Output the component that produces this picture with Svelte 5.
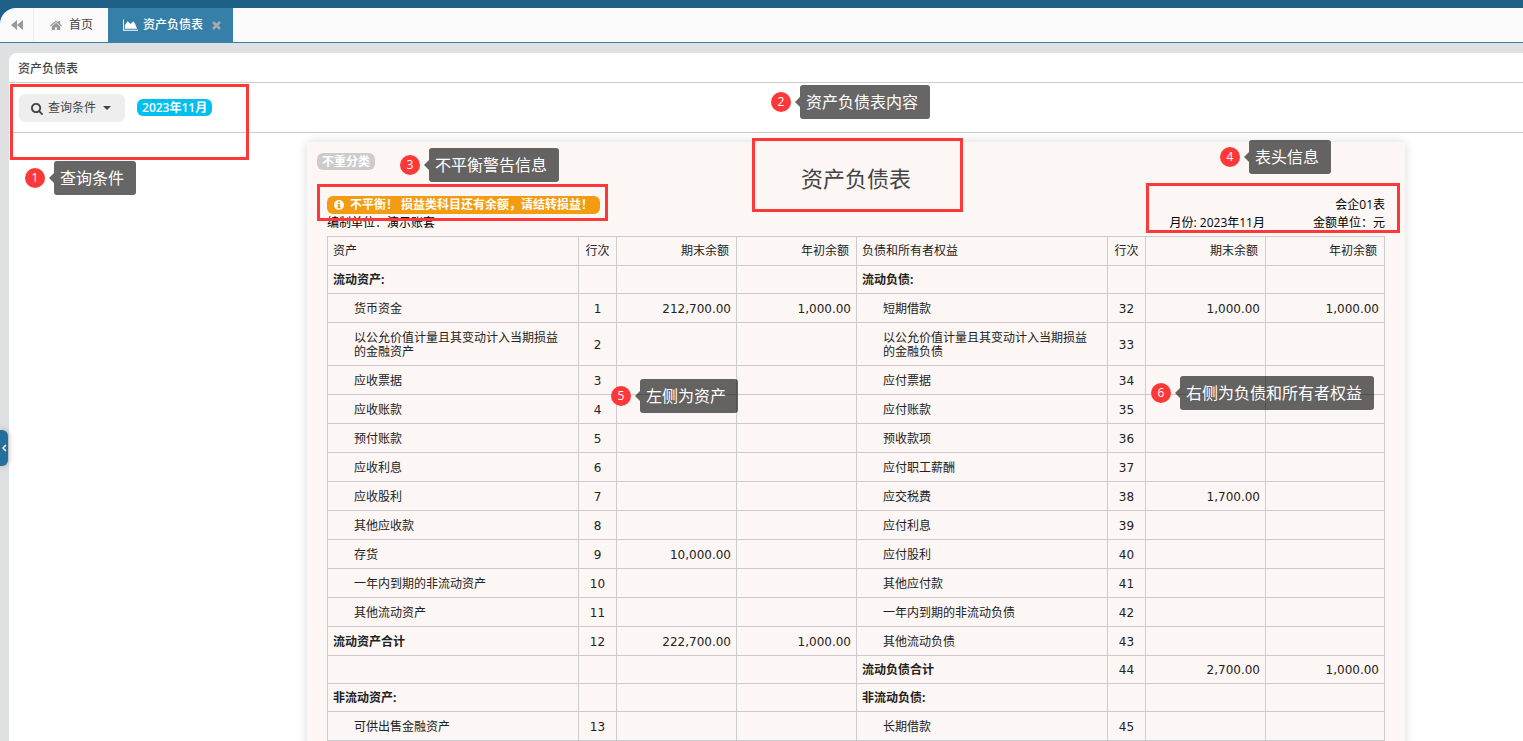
<script lang="ts">
	type Entry = { name?: string; line?: number; end?: string; start?: string; bold?: boolean };

	const month = '2023年11月';

	const rows: [Entry, Entry][] = [
		[{ name: '流动资产:', bold: true }, { name: '流动负债:', bold: true }],
		[
			{ name: '货币资金', line: 1, end: '212,700.00', start: '1,000.00' },
			{ name: '短期借款', line: 32, end: '1,000.00', start: '1,000.00' },
		],
		[
			{ name: '以公允价值计量且其变动计入当期损益的金融资产', line: 2 },
			{ name: '以公允价值计量且其变动计入当期损益的金融负债', line: 33 },
		],
		[{ name: '应收票据', line: 3 }, { name: '应付票据', line: 34 }],
		[{ name: '应收账款', line: 4 }, { name: '应付账款', line: 35 }],
		[{ name: '预付账款', line: 5 }, { name: '预收款项', line: 36 }],
		[{ name: '应收利息', line: 6 }, { name: '应付职工薪酬', line: 37 }],
		[{ name: '应收股利', line: 7 }, { name: '应交税费', line: 38, end: '1,700.00' }],
		[{ name: '其他应收款', line: 8 }, { name: '应付利息', line: 39 }],
		[{ name: '存货', line: 9, end: '10,000.00' }, { name: '应付股利', line: 40 }],
		[{ name: '一年内到期的非流动资产', line: 10 }, { name: '其他应付款', line: 41 }],
		[{ name: '其他流动资产', line: 11 }, { name: '一年内到期的非流动负债', line: 42 }],
		[
			{ name: '流动资产合计', line: 12, end: '222,700.00', start: '1,000.00', bold: true },
			{ name: '其他流动负债', line: 43 },
		],
		[{}, { name: '流动负债合计', line: 44, end: '2,700.00', start: '1,000.00', bold: true }],
		[{ name: '非流动资产:', bold: true }, { name: '非流动负债:', bold: true }],
		[{ name: '可供出售金融资产', line: 13 }, { name: '长期借款', line: 45 }],
	];

	// a row is a little taller as soon as one side holds an indented item
	const hasItem = (row: [Entry, Entry]) => row.some((entry) => entry.name && !entry.bold);
</script>

{#snippet callout(num: number, text: string)}
	<div class="callout callout--{num}">
		<span class="callout_num">{num}</span>
		<span class="callout_text">{text}</span>
	</div>
{/snippet}

<div class="app">
	<nav class="tabs">
		<button class="tabs_back" aria-label="向左滚动">
			<svg width="12" height="10" viewBox="0 0 12 10"><path d="M6 0v10L0 5zM12 0v10L6 5z" /></svg>
		</button>
		<a class="tab" href="#home">
			<svg width="12" height="13" viewBox="0 0 1664 1792">
				<path
					d="M1408 992v480q0 26-19 45t-45 19h-384v-384h-256v384h-384q-26 0-45-19t-19-45v-480q0-1 .5-3t.5-3l575-474 575 474q1 2 1 6zm223-69l-62 74q-8 9-21 11h-3q-13 0-21-7l-692-577-692 577q-12 8-24 7-13-2-21-11l-62-74q-8-10-7-23.5t11-21.5l719-599q32-26 76-26t76 26l244 204v-195q0-14 9-23t23-9h192q14 0 23 9t9 23v408l219 182q10 8 11 21.5t-7 23.5z"
				/>
			</svg>
			<span>首页</span>
		</a>
		<a class="tab tab--active" href="#balance">
			<svg width="15" height="12" viewBox="0 0 16 12">
				<path d="M0 0h1v11h15v1H0zM2 10V6l3-4 3 3 3-3 2 3 2 5z" />
			</svg>
			<span>资产负债表</span>
			<svg class="tab_close" width="12" height="12" viewBox="256 256 1280 1280">
				<path
					d="M1490 1322q0 40-28 68l-136 136q-28 28-68 28t-68-28l-294-294-294 294q-28 28-68 28t-68-28l-136-136q-28-28-28-68t28-68l294-294-294-294q-28-28-28-68t28-68l136-136q28-28 68-28t68 28l294 294 294-294q28-28 68-28t68 28l136 136q28 28 28 68t-28 68l-294 294 294 294q28 28 28 68z"
				/>
			</svg>
		</a>
	</nav>

	<main class="panel">
		<h2 class="panel_title">资产负债表</h2>
		<div class="toolbar">
			<button class="query">
				<svg width="12" height="13" viewBox="0 0 1664 1792">
					<path
						d="M1152 832q0-185-131.5-316.5t-316.5-131.5-316.5 131.5-131.5 316.5 131.5 316.5 316.5 131.5 316.5-131.5 131.5-316.5zm512 832q0 52-38 90t-90 38q-54 0-90-38l-343-342q-179 124-399 124-143 0-273.5-55.5t-225-150-150-225-55.5-273.5 55.5-273.5 150-225 225-150 273.5-55.5 273.5 55.5 225 150 150 225 55.5 273.5q0 220-124 399l343 343q37 37 37 90z"
					/>
				</svg>
				<span>查询条件</span>
				<svg class="query_caret" width="8" height="4" viewBox="0 0 8 4"><path d="M0 0h8L4 4z" /></svg>
			</button>
			<span class="label label--info">{month}</span>
		</div>

		<div class="canvas">
			<section class="sheet">
				<span class="label label--muted">不重分类</span>
				<h1 class="sheet_title">资产负债表</h1>
				<div class="meta">
					<span class="label label--warning">
						<svg width="10" height="10" viewBox="0 0 10 10">
							<circle cx="5" cy="5" r="5" />
							<path fill="#f39c12" d="M4 1.5h2V3H4zM3.4 4H6v3h.7v1.2H3.4V7H4V5h-.6z" />
						</svg>
						<span>不平衡！ 损益类科目还有余额，请结转损益！</span>
					</span>
					<span class="meta_form">会企01表</span>
					<span>编制单位：演示账套</span>
					<span class="meta_month">月份: {month}</span>
					<span class="meta_unit">金额单位：元</span>
				</div>

				<table>
					<colgroup>
						<col class="col_name" /><col class="col_line" /><col class="col_amount" /><col
							class="col_amount"
						/>
						<col class="col_name" /><col class="col_line" /><col class="col_amount" /><col />
					</colgroup>
					<thead>
						<tr>
							{#each ['资产', '负债和所有者权益'] as side}
								<th>{side}</th>
								<th class="line">行次</th>
								<th class="amount">期末余额</th>
								<th class="amount">年初余额</th>
							{/each}
						</tr>
					</thead>
					<tbody>
						{#each rows as row}
							<tr class:compact={!hasItem(row)}>
								{#each row as entry}
									<td class:item={!entry.bold} class:bold={entry.bold}>{entry.name ?? ''}</td>
									<td class="line">{entry.line ?? ''}</td>
									<td class="amount">{entry.end ?? ''}</td>
									<td class="amount">{entry.start ?? ''}</td>
								{/each}
							</tr>
						{/each}
					</tbody>
				</table>

				<div class="mark mark--title"></div>
				<div class="mark mark--warning"></div>
				<div class="mark mark--meta"></div>
				{@render callout(2, '资产负债表内容')}
				{@render callout(3, '不平衡警告信息')}
				{@render callout(4, '表头信息')}
				{@render callout(5, '左侧为资产')}
				{@render callout(6, '右侧为负债和所有者权益')}
			</section>
		</div>

		<div class="mark mark--query"></div>
		{@render callout(1, '查询条件')}
	</main>

	<button class="handle" aria-label="展开菜单">
		<svg width="5" height="8" viewBox="0 0 5 8"><path d="M4 1L1 4l3 3" /></svg>
	</button>
</div>

<style>
	:global(body) {
		margin: 0;
	}

	.app {
		position: relative;
		box-sizing: border-box;
		display: flex;
		flex-direction: column;
		height: 100vh;
		padding-top: 8px;
		overflow: hidden;
		background: linear-gradient(#1f6089 24px, #dfe0e2 24px);
		color: #222;
		font-family: 'Open Sans', 'Noto Sans CJK SC', sans-serif;
		font-size: 12px;
		line-height: 18px;
	}

	.app * {
		box-sizing: border-box;
	}

	button {
		padding: 0;
		border: 0;
		font: inherit;
		cursor: pointer;
	}

	svg {
		flex: none;
		fill: currentColor;
	}

	.tabs {
		display: flex;
		flex: none;
		height: 35px;
		border-bottom: 1px solid #367fa9;
		border-top-left-radius: 16px;
		background: #fafafa;
		overflow: hidden;
	}

	.tabs_back {
		display: flex;
		align-items: center;
		width: 34px;
		padding-left: 11px;
		border-right: 1px solid #eee;
		background: transparent;
		color: #999;
	}

	.tab {
		display: flex;
		align-items: center;
		gap: 7px;
		padding: 0 15px 0 16px;
		color: #444;
		text-decoration: none;
	}

	.tab > svg {
		color: #999;
	}

	.tab--active {
		gap: 5px;
		padding: 0 12px 0 15px;
		background: #367fa9;
		color: #fff;
		font-weight: 500;
	}

	.tab--active > svg {
		color: #fff;
	}

	.tab--active > .tab_close {
		width: 9px;
		margin-left: 4px;
		color: #aaa;
	}

	.panel {
		position: relative;
		flex: 1;
		display: flex;
		flex-direction: column;
		min-height: 0;
		margin: 10px 0 0 9px;
		border-top-left-radius: 8px;
		background: #fff;
	}

	.panel_title {
		flex: none;
		height: 30px;
		margin: 0;
		padding: 1px 0 0 9px;
		border-bottom: 1px solid #ccc;
		color: #444;
		font-size: 12px;
		font-weight: 500;
		line-height: 30px;
	}

	.toolbar {
		display: flex;
		flex: none;
		align-items: center;
		gap: 12px;
		height: 50px;
		padding-left: 10px;
		border-bottom: 1px solid #ccc;
	}

	.query {
		display: flex;
		align-items: center;
		gap: 5px;
		height: 28px;
		padding: 1px 14px 0 12px;
		border-radius: 6px;
		background: #eee;
		color: #444;
	}

	.query_caret {
		margin-left: 2px;
	}

	.label {
		border-radius: 6px;
		color: #fff;
		font-weight: 600;
	}

	.label--info {
		padding: 1px 5px 0;
		background: #00c0ef;
		line-height: 16px;
	}

	.label--muted {
		position: absolute;
		top: 11px;
		left: 10px;
		padding: 0 5px;
		background: #ccc;
		line-height: 17px;
	}

	.label--warning {
		display: flex;
		align-items: center;
		justify-self: start;
		gap: 6px;
		padding: 0 7px;
		background: #f39c12;
		white-space: nowrap;
	}

	.canvas {
		display: flex;
		flex: 1;
		justify-content: center;
		min-height: 0;
		padding: 9px 0 0 180px;
	}

	.sheet {
		position: relative;
		align-self: flex-start;
		flex: 0 1 1098px;
		padding: 18px 20px 20px;
		background: #fcf6f4;
		box-shadow: 0 0 10px rgba(0, 0, 0, 0.15);
	}

	.sheet_title {
		margin: 0;
		color: #444;
		font-size: 22px;
		font-weight: 400;
		line-height: 36px;
		text-align: center;
	}

	.meta {
		display: grid;
		grid-template-columns: 1fr 200px 120px;
		margin-bottom: 4px;
		color: #000;
	}

	.meta_form {
		grid-column: 2 / 4;
		text-align: right;
	}

	.meta_month,
	.meta_unit {
		text-align: right;
	}

	table {
		width: 100%;
		border-collapse: collapse;
		table-layout: fixed;
		line-height: 14px;
	}

	.col_name {
		width: 251px;
	}

	.col_line {
		width: 38px;
	}

	.col_amount {
		width: 120px;
	}

	tr {
		height: 29px;
	}

	.compact {
		height: 28px;
	}

	th,
	td {
		padding: 0 5px;
		border: 1px solid #ccc;
		font-weight: 400;
		text-align: left;
	}

	th.amount {
		padding-right: 7px;
	}

	td.line,
	td.amount,
	.bold {
		padding-top: 2px;
	}

	.item {
		padding: 8px 16px 6px 26px;
	}

	.compact td {
		padding-block: 0;
	}

	.bold {
		font-weight: 700;
	}

	.line {
		padding-inline: 0;
		text-align: center;
	}

	td.line,
	td.amount {
		font-family: Verdana, 'DejaVu Sans', sans-serif;
	}

	.amount {
		text-align: right;
	}

	.handle {
		position: absolute;
		top: 430px;
		left: 0;
		width: 8px;
		height: 36px;
		border-radius: 0 6px 6px 0;
		background: #246f9b;
		box-shadow: 0 0 6px rgba(0, 0, 0, 0.3);
		color: #fff;
		line-height: 8px;
	}

	.handle path {
		fill: none;
		stroke: currentColor;
		stroke-width: 1.5;
	}

	.mark {
		position: absolute;
		border: 3px solid #fd3838;
		pointer-events: none;
	}

	.mark--query {
		top: 31px;
		left: 1px;
		width: 239px;
		height: 76px;
	}

	.mark--title {
		top: -4px;
		left: 445px;
		width: 211px;
		height: 74px;
	}

	.mark--warning {
		top: 42px;
		left: 10px;
		width: 291px;
		height: 37px;
	}

	.mark--meta {
		top: 41px;
		right: 5px;
		width: 254px;
		height: 50px;
	}

	.callout {
		position: absolute;
		display: flex;
		align-items: center;
		gap: 9px;
		color: #fff;
		white-space: nowrap;
	}

	.callout_num {
		width: 20px;
		height: 20px;
		border-radius: 50%;
		background: #fd3838;
		line-height: 20px;
		text-align: center;
	}

	.callout_text {
		position: relative;
		padding: 0 12px 0 6px;
		border-radius: 3px;
		background: rgba(0, 0, 0, 0.6);
		font-size: 16px;
		line-height: 34px;
	}

	.callout_text::before {
		content: '';
		position: absolute;
		top: 12px;
		right: 100%;
		border: 5px solid transparent;
		border-left-width: 0;
		border-right-color: rgba(0, 0, 0, 0.6);
	}

	.callout--1 {
		top: 108px;
		left: 16px;
	}

	.callout--2 {
		top: -57px;
		left: 464px;
	}

	.callout--3 {
		top: 6px;
		left: 93px;
	}

	.callout--4 {
		top: -2px;
		left: 913px;
	}

	.callout--5 {
		top: 237px;
		left: 304px;
	}

	.callout--6 {
		top: 234px;
		left: 844px;
	}
</style>
